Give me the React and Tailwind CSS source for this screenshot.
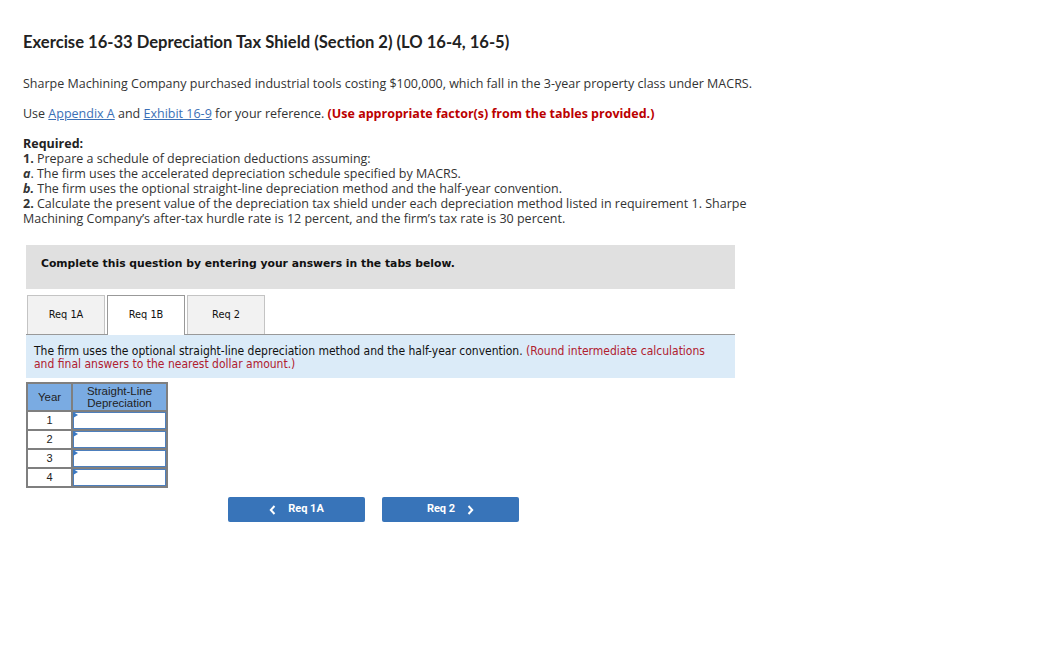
import { useState } from "react";

const rows = [1, 2, 3, 4];

export default function App() {
  const [tab, setTab] = useState("1B");
  const [values, setValues] = useState({ 1: "", 2: "", 3: "", 4: "" });

  return (
    <div className="min-h-screen bg-white text-[#333] font-['Open_Sans',sans-serif]">
      <div className="pl-[23px] pt-[32px] w-[762px]">
        <h1 className="text-[16.6px] leading-[20px] font-bold text-[#222] font-['Lato',sans-serif]">
          Exercise 16-33 Depreciation Tax Shield (Section 2) (LO 16-4, 16-5)
        </h1>

        <p className="mt-[24px] text-[12.5px] leading-[15px]">
          Sharpe Machining Company purchased industrial tools costing $100,000, which fall in the 3-year property class under MACRS.
        </p>

        <p className="mt-[15px] text-[12.5px] leading-[15px]">
          Use <a href="#" className="text-[#3b6fb6] underline">Appendix A</a> and{" "}
          <a href="#" className="text-[#3b6fb6] underline">Exhibit 16-9</a> for your reference.{" "}
          <b className="text-[#b00] font-bold">(Use appropriate factor(s) from the tables provided.)</b>
        </p>

        <div className="mt-[15px] text-[12.5px] leading-[15px]">
          <div className="font-bold text-[#222]">Required:</div>
          <div><b>1.</b> Prepare a schedule of depreciation deductions assuming:</div>
          <div><b><i>a</i></b>. The firm uses the accelerated depreciation schedule specified by MACRS.</div>
          <div><b><i>b.</i></b> The firm uses the optional straight-line depreciation method and the half-year convention.</div>
          <div>
            <b>2.</b> Calculate the present value of the depreciation tax shield under each depreciation method listed in requirement 1. Sharpe Machining Company’s after-tax hurdle rate is 12 percent, and the firm’s tax rate is 30 percent.
          </div>
        </div>
      </div>

      <div className="ml-[26px] w-[709px] mt-[19px]">
        <div className="bg-[#e0e0e0] h-[44px] pl-[15px] pt-[11px] font-['DejaVu_Sans',sans-serif] text-[10.8px] font-bold text-[#111]">
          Complete this question by entering your answers in the tabs below.
        </div>

        <div className="mt-[6px] flex items-end border-b border-[#999] h-[40px] pl-[1px] gap-[2px] font-['DejaVu_Sans',sans-serif] text-[9.8px] text-[#111]">
          {["1A", "1B", "2"].map((t) => (
            <button
              key={t}
              onClick={() => setTab(t)}
              className={
                t === tab
                  ? "w-[78px] h-[40px] bg-white border border-[#999] border-b-0 -mb-px"
                  : "w-[78px] h-[39px] bg-[#f2f2f2] border border-[#c4c4c4] border-b-0"
              }
            >
              Req {t}
            </button>
          ))}
        </div>

        <div className="bg-[#dbebf8] h-[43px] px-[8px] pt-[10px] pr-[20px] font-['DejaVu_Sans_Condensed','DejaVu_Sans',sans-serif] text-[12px] leading-[13px] text-[#111]">
          The firm uses the optional straight-line depreciation method and the half-year convention.{" "}
          <span className="text-[#b0202f]">(Round intermediate calculations and final answers to the nearest dollar amount.)</span>
        </div>

        <table className="mt-[4px] border-collapse font-['Liberation_Sans',Arial,sans-serif] text-[11.5px] text-[#222]">
          <thead>
            <tr className="bg-[#7aabe2] h-[28px]">
              <th className="w-[45px] border-2 border-[#7f7f7f] font-normal leading-[12px]">Year</th>
              <th className="w-[95px] border-2 border-[#7f7f7f] font-normal leading-[12px]">
                Straight-Line
                <br />
                Depreciation
              </th>
            </tr>
          </thead>
          <tbody>
            {rows.map((r) => (
              <tr key={r} className="h-[19px]">
                <td className="border-2 border-[#7f7f7f] text-center text-[11px] leading-[15px]">{r}</td>
                <td className="border-2 border-[#7f7f7f] p-0 relative">
                  <span className="absolute left-0 top-0 w-0 h-0 border-t-[3px] border-b-[3px] border-l-[5px] border-t-transparent border-b-transparent border-l-[#3a78c2]" />
                  <input
                    value={values[r]}
                    onChange={(e) => setValues({ ...values, [r]: e.target.value })}
                    className="block w-full h-[17px] border border-[#4d7fbd] bg-white outline-none px-1 text-[11px]"
                  />
                </td>
              </tr>
            ))}
          </tbody>
        </table>

        <div className="mt-[9px] pl-[202px] flex gap-[17px] font-['Roboto',sans-serif] text-[11px] font-bold text-white">
          <button className="w-[137px] h-[25px] rounded-[2px] bg-[#3874b9] flex items-center justify-center gap-[12px]">
            <svg width="7" height="10" viewBox="0 0 7 10" fill="none" stroke="white" strokeWidth="2">
              <path d="M5.5 1 L1.8 5 L5.5 9" />
            </svg>
            Req 1A
          </button>
          <button className="w-[137px] h-[25px] rounded-[2px] bg-[#3874b9] flex items-center justify-center gap-[12px]">
            Req 2
            <svg width="7" height="10" viewBox="0 0 7 10" fill="none" stroke="white" strokeWidth="2">
              <path d="M1.5 1 L5.2 5 L1.5 9" />
            </svg>
          </button>
        </div>
      </div>
    </div>
  );
}
